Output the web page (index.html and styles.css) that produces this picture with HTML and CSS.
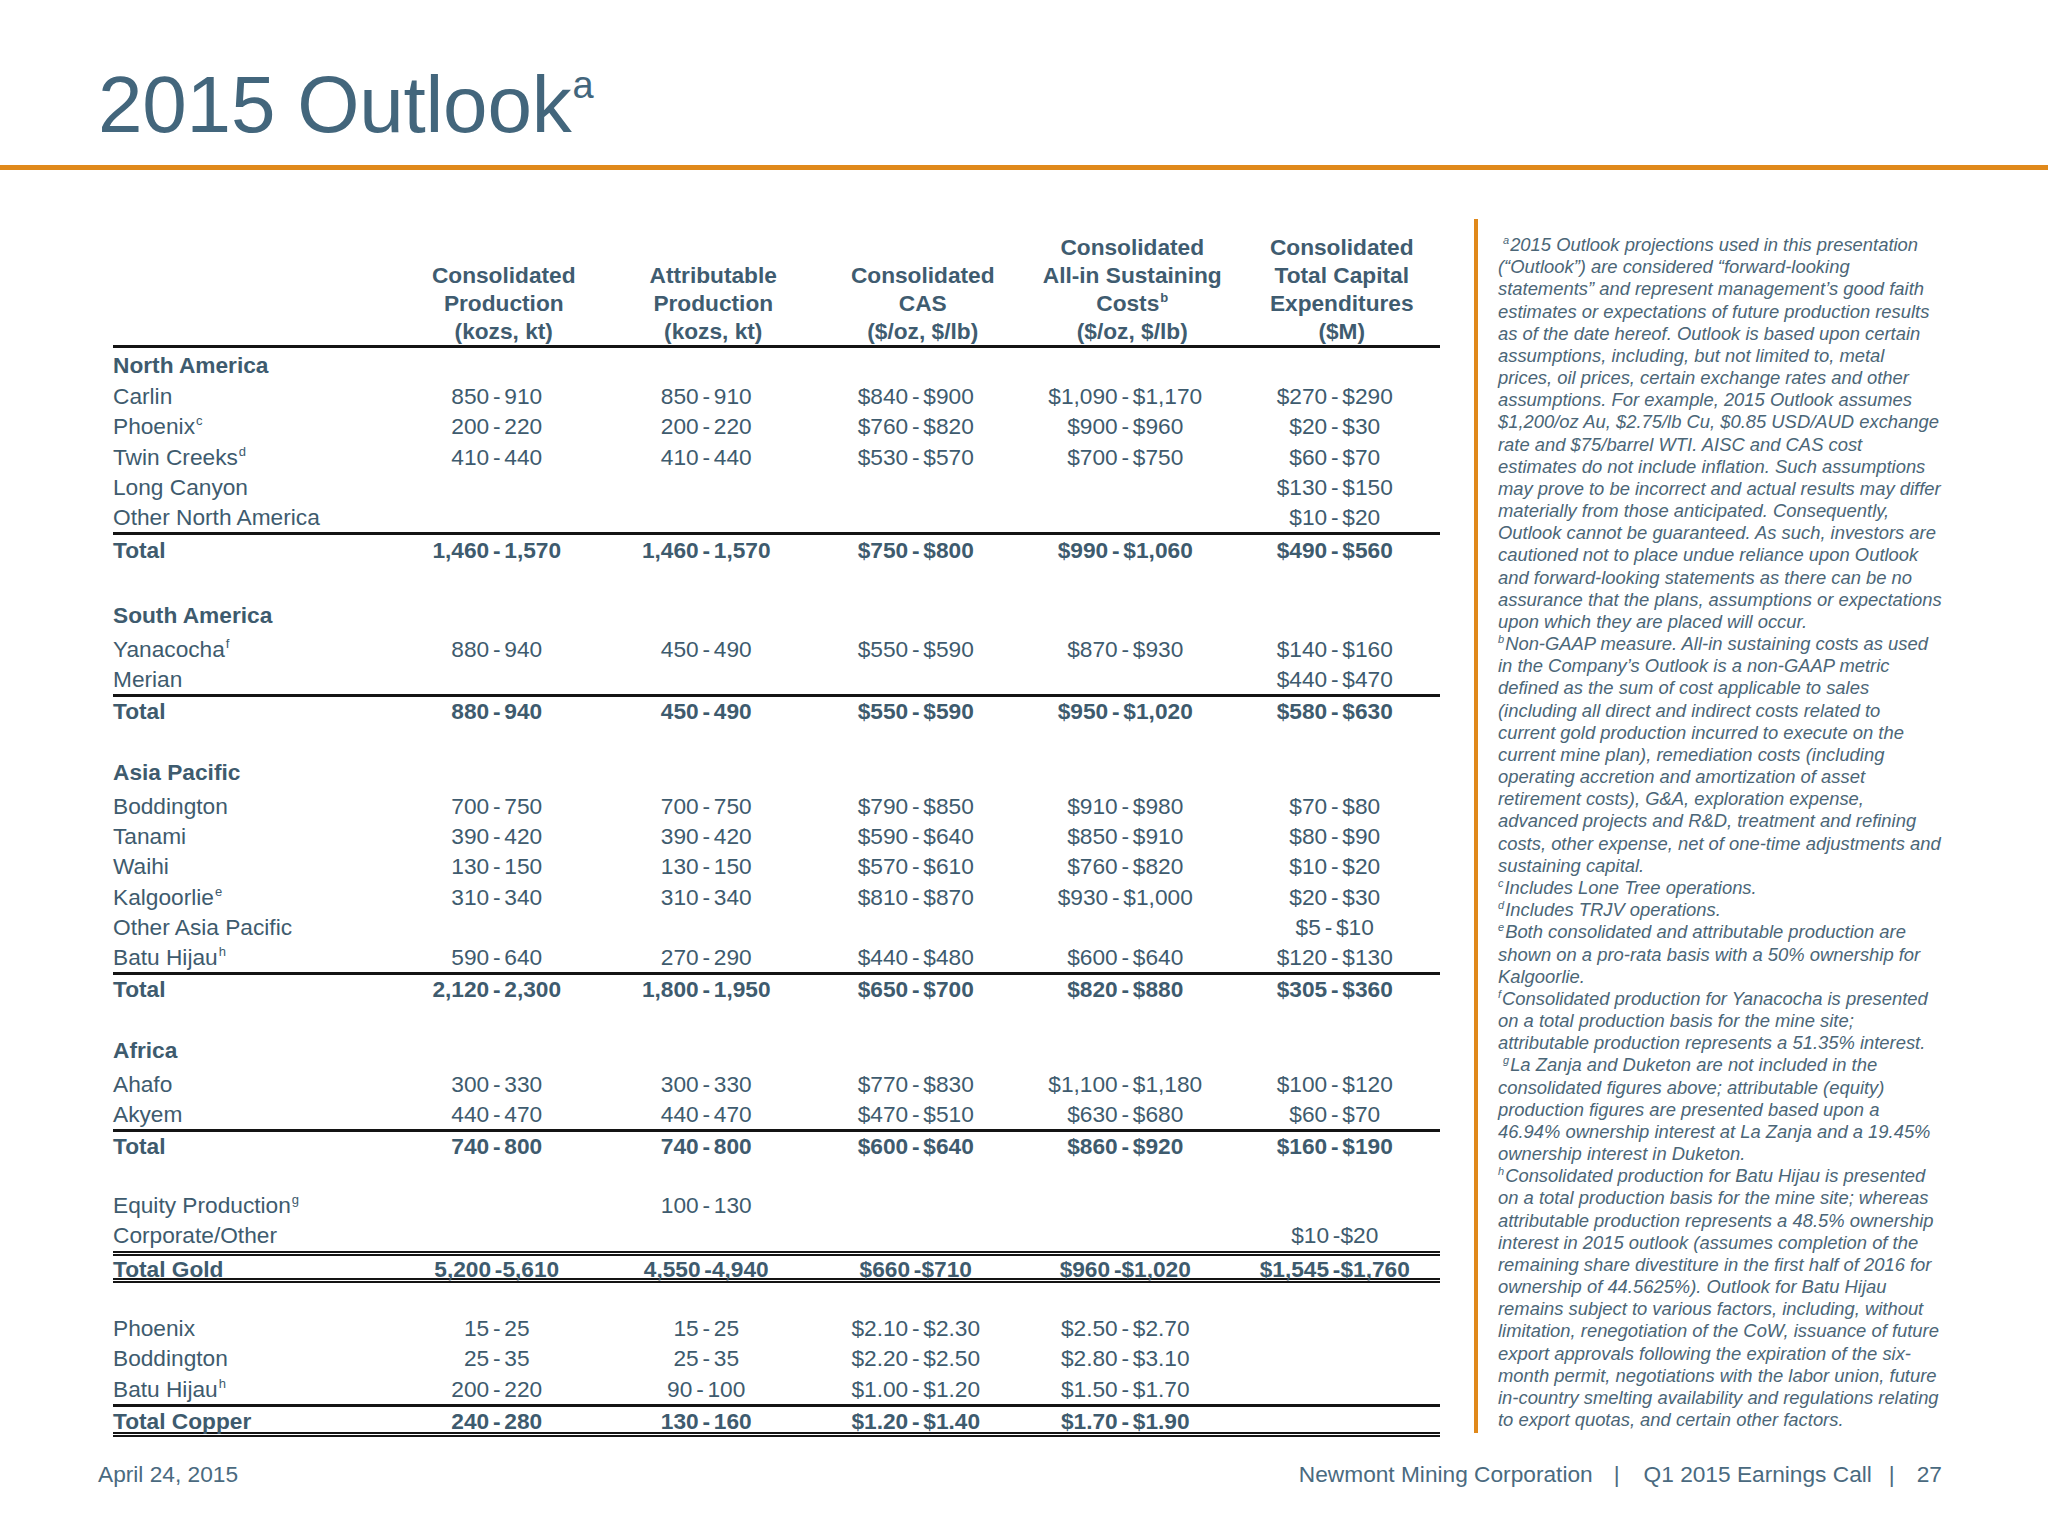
FILE: index.html
```html
<!DOCTYPE html>
<html lang="en">
<head>
<meta charset="utf-8">
<title>2015 Outlook</title>
<link rel="stylesheet" href="styles.css">
</head>
<body>
<div class="slide">
  <header class="slide-head">
    <h1 class="title">2015 Outlook<span class="title-sup">a</span></h1>
  </header>
  <div class="rule"></div>

  <main class="content">
    <section class="outlook">
      <div class="row head">
        <div class="lbl"></div>
        <div class="hc">Consolidated<br>Production<br>(kozs, kt)</div>
        <div class="hc">Attributable<br>Production<br>(kozs, kt)</div>
        <div class="hc">Consolidated<br>CAS<br>($/oz, $/lb)</div>
        <div class="hc">Consolidated<br>All-in Sustaining<br>Costs<sup class="s">b</sup><br>($/oz, $/lb)</div>
        <div class="hc">Consolidated<br>Total Capital<br>Expenditures<br>($M)</div>
      </div>

      <div class="row sec sec-first"><div class="lbl">North America</div></div>
      <div class="row"><div class="lbl">Carlin</div><div class="v">850 - 910</div><div class="v">850 - 910</div><div class="v">$840 - $900</div><div class="v">$1,090 - $1,170</div><div class="v">$270 - $290</div></div>
      <div class="row"><div class="lbl">Phoenix<sup class="s">c</sup></div><div class="v">200 - 220</div><div class="v">200 - 220</div><div class="v">$760 - $820</div><div class="v">$900 - $960</div><div class="v">$20 - $30</div></div>
      <div class="row"><div class="lbl">Twin Creeks<sup class="s">d</sup></div><div class="v">410 - 440</div><div class="v">410 - 440</div><div class="v">$530 - $570</div><div class="v">$700 - $750</div><div class="v">$60 - $70</div></div>
      <div class="row"><div class="lbl">Long Canyon</div><div class="v"></div><div class="v"></div><div class="v"></div><div class="v"></div><div class="v">$130 - $150</div></div>
      <div class="row"><div class="lbl">Other North America</div><div class="v"></div><div class="v"></div><div class="v"></div><div class="v"></div><div class="v">$10 - $20</div></div>
      <div class="row total"><div class="lbl">Total</div><div class="v">1,460 - 1,570</div><div class="v">1,460 - 1,570</div><div class="v">$750 - $800</div><div class="v">$990 - $1,060</div><div class="v">$490 - $560</div></div>
      <div class="row blank blank-lg"></div>

      <div class="row sec"><div class="lbl">South America</div></div>
      <div class="row"><div class="lbl">Yanacocha<sup class="s">f</sup></div><div class="v">880 - 940</div><div class="v">450 - 490</div><div class="v">$550 - $590</div><div class="v">$870 - $930</div><div class="v">$140 - $160</div></div>
      <div class="row"><div class="lbl">Merian</div><div class="v"></div><div class="v"></div><div class="v"></div><div class="v"></div><div class="v">$440 - $470</div></div>
      <div class="row total"><div class="lbl">Total</div><div class="v">880 - 940</div><div class="v">450 - 490</div><div class="v">$550 - $590</div><div class="v">$950 - $1,020</div><div class="v">$580 - $630</div></div>
      <div class="row blank"></div>

      <div class="row sec"><div class="lbl">Asia Pacific</div></div>
      <div class="row"><div class="lbl">Boddington</div><div class="v">700 - 750</div><div class="v">700 - 750</div><div class="v">$790 - $850</div><div class="v">$910 - $980</div><div class="v">$70 - $80</div></div>
      <div class="row"><div class="lbl">Tanami</div><div class="v">390 - 420</div><div class="v">390 - 420</div><div class="v">$590 - $640</div><div class="v">$850 - $910</div><div class="v">$80 - $90</div></div>
      <div class="row"><div class="lbl">Waihi</div><div class="v">130 - 150</div><div class="v">130 - 150</div><div class="v">$570 - $610</div><div class="v">$760 - $820</div><div class="v">$10 - $20</div></div>
      <div class="row"><div class="lbl">Kalgoorlie<sup class="s">e</sup></div><div class="v">310 - 340</div><div class="v">310 - 340</div><div class="v">$810 - $870</div><div class="v">$930 - $1,000</div><div class="v">$20 - $30</div></div>
      <div class="row"><div class="lbl">Other Asia Pacific</div><div class="v"></div><div class="v"></div><div class="v"></div><div class="v"></div><div class="v">$5 - $10</div></div>
      <div class="row"><div class="lbl">Batu Hijau<sup class="s">h</sup></div><div class="v">590 - 640</div><div class="v">270 - 290</div><div class="v">$440 - $480</div><div class="v">$600 - $640</div><div class="v">$120 - $130</div></div>
      <div class="row total"><div class="lbl">Total</div><div class="v">2,120 - 2,300</div><div class="v">1,800 - 1,950</div><div class="v">$650 - $700</div><div class="v">$820 - $880</div><div class="v">$305 - $360</div></div>
      <div class="row blank"></div>

      <div class="row sec"><div class="lbl">Africa</div></div>
      <div class="row"><div class="lbl">Ahafo</div><div class="v">300 - 330</div><div class="v">300 - 330</div><div class="v">$770 - $830</div><div class="v">$1,100 - $1,180</div><div class="v">$100 - $120</div></div>
      <div class="row"><div class="lbl">Akyem</div><div class="v">440 - 470</div><div class="v">440 - 470</div><div class="v">$470 - $510</div><div class="v">$630 - $680</div><div class="v">$60 - $70</div></div>
      <div class="row total"><div class="lbl">Total</div><div class="v">740 - 800</div><div class="v">740 - 800</div><div class="v">$600 - $640</div><div class="v">$860 - $920</div><div class="v">$160 - $190</div></div>
      <div class="row blank"></div>

      <div class="row"><div class="lbl">Equity Production<sup class="s">g</sup></div><div class="v"></div><div class="v">100 - 130</div><div class="v"></div><div class="v"></div><div class="v"></div></div>
      <div class="row"><div class="lbl">Corporate/Other</div><div class="v"></div><div class="v"></div><div class="v"></div><div class="v"></div><div class="v">$10 -$20</div></div>
      <div class="row grand"><div class="lbl">Total Gold</div><div class="v">5,200 -5,610</div><div class="v">4,550 -4,940</div><div class="v">$660 -$710</div><div class="v">$960 -$1,020</div><div class="v">$1,545 -$1,760</div></div>
      <div class="row blank"></div>

      <div class="row"><div class="lbl">Phoenix</div><div class="v">15 - 25</div><div class="v">15 - 25</div><div class="v">$2.10 - $2.30</div><div class="v">$2.50 - $2.70</div><div class="v"></div></div>
      <div class="row"><div class="lbl">Boddington</div><div class="v">25 - 35</div><div class="v">25 - 35</div><div class="v">$2.20 - $2.50</div><div class="v">$2.80 - $3.10</div><div class="v"></div></div>
      <div class="row"><div class="lbl">Batu Hijau<sup class="s">h</sup></div><div class="v">200 - 220</div><div class="v">90 - 100</div><div class="v">$1.00 - $1.20</div><div class="v">$1.50 - $1.70</div><div class="v"></div></div>
      <div class="row total copper"><div class="lbl">Total Copper</div><div class="v">240 - 280</div><div class="v">130 - 160</div><div class="v">$1.20 - $1.40</div><div class="v">$1.70 - $1.90</div><div class="v"></div></div>
    </section>

    <aside class="notes">
      <div class="ln ind"><sup class="fn">a</sup>2015 Outlook projections used in this presentation</div>
      <div class="ln">(“Outlook”) are considered “forward-looking</div>
      <div class="ln">statements” and represent management’s good faith</div>
      <div class="ln">estimates or expectations of future production results</div>
      <div class="ln">as of the date hereof. Outlook is based upon certain</div>
      <div class="ln">assumptions, including, but not limited to, metal</div>
      <div class="ln">prices, oil prices, certain exchange rates and other</div>
      <div class="ln">assumptions. For example, 2015 Outlook assumes</div>
      <div class="ln">$1,200/oz Au, $2.75/lb Cu, $0.85 USD/AUD exchange</div>
      <div class="ln">rate and $75/barrel WTI. AISC and CAS cost</div>
      <div class="ln">estimates do not include inflation. Such assumptions</div>
      <div class="ln">may prove to be incorrect and actual results may differ</div>
      <div class="ln">materially from those anticipated. Consequently,</div>
      <div class="ln">Outlook cannot be guaranteed. As such, investors are</div>
      <div class="ln">cautioned not to place undue reliance upon Outlook</div>
      <div class="ln">and forward-looking statements as there can be no</div>
      <div class="ln">assurance that the plans, assumptions or expectations</div>
      <div class="ln">upon which they are placed will occur.</div>
      <div class="ln"><sup class="fn">b</sup>Non-GAAP measure. All-in sustaining costs as used</div>
      <div class="ln">in the Company’s Outlook is a non-GAAP metric</div>
      <div class="ln">defined as the sum of cost applicable to sales</div>
      <div class="ln">(including all direct and indirect costs related to</div>
      <div class="ln">current gold production incurred to execute on the</div>
      <div class="ln">current mine plan), remediation costs (including</div>
      <div class="ln">operating accretion and amortization of asset</div>
      <div class="ln">retirement costs), G&amp;A, exploration expense,</div>
      <div class="ln">advanced projects and R&amp;D, treatment and refining</div>
      <div class="ln">costs, other expense, net of one-time adjustments and</div>
      <div class="ln">sustaining capital.</div>
      <div class="ln"><sup class="fn">c</sup>Includes Lone Tree operations.</div>
      <div class="ln"><sup class="fn">d</sup>Includes TRJV operations.</div>
      <div class="ln"><sup class="fn">e</sup>Both consolidated and attributable production are</div>
      <div class="ln">shown on a pro-rata basis with a 50% ownership for</div>
      <div class="ln">Kalgoorlie.</div>
      <div class="ln"><sup class="fn">f</sup>Consolidated production for Yanacocha is presented</div>
      <div class="ln">on a total production basis for the mine site;</div>
      <div class="ln">attributable production represents a 51.35% interest.</div>
      <div class="ln ind"><sup class="fn">g</sup>La Zanja and Duketon are not included in the</div>
      <div class="ln">consolidated figures above; attributable (equity)</div>
      <div class="ln">production figures are presented based upon a</div>
      <div class="ln">46.94% ownership interest at La Zanja and a 19.45%</div>
      <div class="ln">ownership interest in Duketon.</div>
      <div class="ln"><sup class="fn">h</sup>Consolidated production for Batu Hijau is presented</div>
      <div class="ln">on a total production basis for the mine site; whereas</div>
      <div class="ln">attributable production represents a 48.5% ownership</div>
      <div class="ln">interest in 2015 outlook (assumes completion of the</div>
      <div class="ln">remaining share divestiture in the first half of 2016 for</div>
      <div class="ln">ownership of 44.5625%). Outlook for Batu Hijau</div>
      <div class="ln">remains subject to various factors, including, without</div>
      <div class="ln">limitation, renegotiation of the CoW, issuance of future</div>
      <div class="ln">export approvals following the expiration of the six-</div>
      <div class="ln">month permit, negotiations with the labor union, future</div>
      <div class="ln">in-country smelting availability and regulations relating</div>
      <div class="ln">to export quotas, and certain other factors.</div>
    </aside>
  </main>

  <footer class="slide-foot">
    <div class="date">April 24, 2015</div>
    <div class="meta"><span>Newmont Mining Corporation</span><span class="sep sep1">|</span><span>Q1 2015 Earnings Call</span><span class="sep sep2">|</span><span>27</span></div>
  </footer>
</div>
</body>
</html>
```

FILE: styles.css
```css
* { box-sizing: border-box; }

html, body {
  margin: 0;
  padding: 0;
  background: #ffffff;
}

body {
  font-family: "Liberation Sans", Arial, sans-serif;
  color: #3e5b6e;
}

.slide {
  width: 2048px;
  height: 1536px;
  position: relative;
  overflow: hidden;
  background: #ffffff;
}

/* ---------- header ---------- */
.slide-head {
  height: 165px;
  padding: 65px 0 0 98px;
}

.title {
  margin: 0;
  font-weight: normal;
  font-size: 80px;
  line-height: 80px;
  color: #43667c;
  letter-spacing: -0.2px;
}

.title-sup {
  font-size: 38px;
  position: relative;
  top: -34px;
  margin-left: 1px;
}

.rule {
  height: 5px;
  background: #e0891b;
}

/* ---------- main ---------- */
.content {
  display: flex;
  align-items: flex-start;
  height: 1289px;
  padding-top: 49px;
}

.outlook {
  margin-left: 113px;
  margin-top: 14px;
  width: 1327px;
  flex: none;
  font-size: 22.7px;
}

.row {
  display: grid;
  grid-template-columns: 286px repeat(5, 209.5px);
  align-items: center;
  height: 30.3px;
  line-height: 26px;
  white-space: nowrap;
}

.lbl {
  text-align: left;
}

.v {
  text-align: center;
  padding-right: 14px;
  word-spacing: -2.5px;
}

.s {
  font-size: 13px;
  line-height: 0;
  vertical-align: baseline;
  position: relative;
  top: -9px;
  margin-left: 1px;
}

.head {
  height: 115px;
  align-items: end;
  border-bottom: 3px solid #141414;
  font-weight: bold;
  color: #3f5c70;
}

.hc {
  text-align: center;
  line-height: 28px;
}

.sec {
  height: 35.8px;
  font-weight: bold;
  padding-bottom: 1px;
}

.sec-first {
  height: 33px;
  padding-bottom: 0;
}

.blank-lg {
  height: 35px;
}

.total {
  font-weight: bold;
  border-top: 3px solid #141414;
  padding-top: 1px;
}

.grand {
  font-weight: bold;
  height: 32px;
  border-top: 5px double #141414;
  border-bottom: 5px double #141414;
}

.copper {
  height: 33px;
  border-bottom: 5px double #141414;
}

/* ---------- notes ---------- */
.notes {
  margin-left: 34px;
  border-left: 4px solid #e0891b;
  padding: 15px 0 0 20px;
  height: 1214px;
  font-size: 18.4px;
  font-style: italic;
  line-height: 22.18px;
  color: #4b6677;
}

.ln {
  white-space: nowrap;
  height: 22.18px;
}

.ln.ind {
  padding-left: 5px;
}

.fn {
  font-size: 11px;
  line-height: 0;
  vertical-align: baseline;
  position: relative;
  top: -7px;
  margin-right: 1px;
}

/* ---------- footer ---------- */
.slide-foot {
  display: flex;
  justify-content: space-between;
  align-items: center;
  height: 30px;
  padding: 0 106px 0 98px;
  font-size: 22.7px;
  line-height: 30px;
  color: #4a6a80;
}

.meta {
  display: flex;
  white-space: nowrap;
}

.sep1 {
  margin: 0 24px 0 21px;
}

.sep2 {
  margin: 0 22px 0 17px;
}
```
